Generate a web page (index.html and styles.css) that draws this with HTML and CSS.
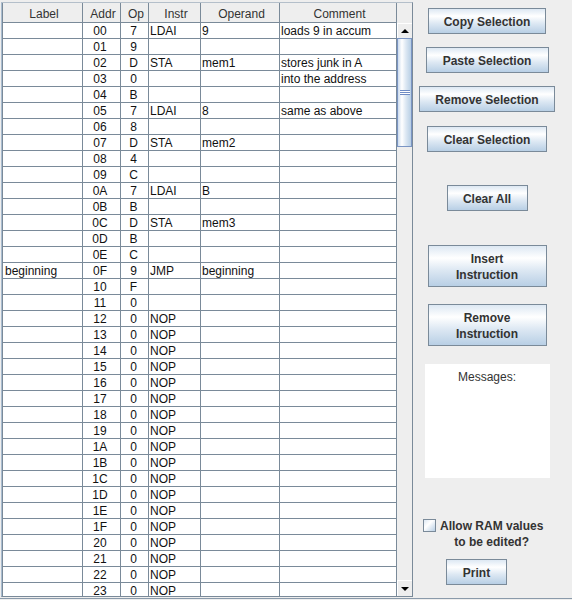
FILE: index.html
```html
<!DOCTYPE html>
<html>
<head>
<meta charset="utf-8">
<link rel="stylesheet" href="styles.css">
</head>
<body>
<div class="app">
  <div class="pane">
    <div class="table-col">
      <div class="thead">
        <div class="th">Label</div><div class="th">Addr</div><div class="th">Op</div><div class="th">Instr</div><div class="th">Operand</div><div class="th">Comment</div>
      </div>
      <div class="row"><div class="c c-label"></div><div class="c c-addr">00</div><div class="c c-op">7</div><div class="c c-txt">LDAI</div><div class="c c-txt">9</div><div class="c c-txt">loads 9 in accum</div></div>
      <div class="row"><div class="c c-label"></div><div class="c c-addr">01</div><div class="c c-op">9</div><div class="c c-txt"></div><div class="c c-txt"></div><div class="c c-txt"></div></div>
      <div class="row"><div class="c c-label"></div><div class="c c-addr">02</div><div class="c c-op">D</div><div class="c c-txt">STA</div><div class="c c-txt">mem1</div><div class="c c-txt">stores junk in A</div></div>
      <div class="row"><div class="c c-label"></div><div class="c c-addr">03</div><div class="c c-op">0</div><div class="c c-txt"></div><div class="c c-txt"></div><div class="c c-txt">into the address</div></div>
      <div class="row"><div class="c c-label"></div><div class="c c-addr">04</div><div class="c c-op">B</div><div class="c c-txt"></div><div class="c c-txt"></div><div class="c c-txt"></div></div>
      <div class="row"><div class="c c-label"></div><div class="c c-addr">05</div><div class="c c-op">7</div><div class="c c-txt">LDAI</div><div class="c c-txt">8</div><div class="c c-txt">same as above</div></div>
      <div class="row"><div class="c c-label"></div><div class="c c-addr">06</div><div class="c c-op">8</div><div class="c c-txt"></div><div class="c c-txt"></div><div class="c c-txt"></div></div>
      <div class="row"><div class="c c-label"></div><div class="c c-addr">07</div><div class="c c-op">D</div><div class="c c-txt">STA</div><div class="c c-txt">mem2</div><div class="c c-txt"></div></div>
      <div class="row"><div class="c c-label"></div><div class="c c-addr">08</div><div class="c c-op">4</div><div class="c c-txt"></div><div class="c c-txt"></div><div class="c c-txt"></div></div>
      <div class="row"><div class="c c-label"></div><div class="c c-addr">09</div><div class="c c-op">C</div><div class="c c-txt"></div><div class="c c-txt"></div><div class="c c-txt"></div></div>
      <div class="row"><div class="c c-label"></div><div class="c c-addr">0A</div><div class="c c-op">7</div><div class="c c-txt">LDAI</div><div class="c c-txt">B</div><div class="c c-txt"></div></div>
      <div class="row"><div class="c c-label"></div><div class="c c-addr">0B</div><div class="c c-op">B</div><div class="c c-txt"></div><div class="c c-txt"></div><div class="c c-txt"></div></div>
      <div class="row"><div class="c c-label"></div><div class="c c-addr">0C</div><div class="c c-op">D</div><div class="c c-txt">STA</div><div class="c c-txt">mem3</div><div class="c c-txt"></div></div>
      <div class="row"><div class="c c-label"></div><div class="c c-addr">0D</div><div class="c c-op">B</div><div class="c c-txt"></div><div class="c c-txt"></div><div class="c c-txt"></div></div>
      <div class="row"><div class="c c-label"></div><div class="c c-addr">0E</div><div class="c c-op">C</div><div class="c c-txt"></div><div class="c c-txt"></div><div class="c c-txt"></div></div>
      <div class="row"><div class="c c-label">beginning</div><div class="c c-addr">0F</div><div class="c c-op">9</div><div class="c c-txt">JMP</div><div class="c c-txt">beginning</div><div class="c c-txt"></div></div>
      <div class="row"><div class="c c-label"></div><div class="c c-addr">10</div><div class="c c-op">F</div><div class="c c-txt"></div><div class="c c-txt"></div><div class="c c-txt"></div></div>
      <div class="row"><div class="c c-label"></div><div class="c c-addr">11</div><div class="c c-op">0</div><div class="c c-txt"></div><div class="c c-txt"></div><div class="c c-txt"></div></div>
      <div class="row"><div class="c c-label"></div><div class="c c-addr">12</div><div class="c c-op">0</div><div class="c c-txt">NOP</div><div class="c c-txt"></div><div class="c c-txt"></div></div>
      <div class="row"><div class="c c-label"></div><div class="c c-addr">13</div><div class="c c-op">0</div><div class="c c-txt">NOP</div><div class="c c-txt"></div><div class="c c-txt"></div></div>
      <div class="row"><div class="c c-label"></div><div class="c c-addr">14</div><div class="c c-op">0</div><div class="c c-txt">NOP</div><div class="c c-txt"></div><div class="c c-txt"></div></div>
      <div class="row"><div class="c c-label"></div><div class="c c-addr">15</div><div class="c c-op">0</div><div class="c c-txt">NOP</div><div class="c c-txt"></div><div class="c c-txt"></div></div>
      <div class="row"><div class="c c-label"></div><div class="c c-addr">16</div><div class="c c-op">0</div><div class="c c-txt">NOP</div><div class="c c-txt"></div><div class="c c-txt"></div></div>
      <div class="row"><div class="c c-label"></div><div class="c c-addr">17</div><div class="c c-op">0</div><div class="c c-txt">NOP</div><div class="c c-txt"></div><div class="c c-txt"></div></div>
      <div class="row"><div class="c c-label"></div><div class="c c-addr">18</div><div class="c c-op">0</div><div class="c c-txt">NOP</div><div class="c c-txt"></div><div class="c c-txt"></div></div>
      <div class="row"><div class="c c-label"></div><div class="c c-addr">19</div><div class="c c-op">0</div><div class="c c-txt">NOP</div><div class="c c-txt"></div><div class="c c-txt"></div></div>
      <div class="row"><div class="c c-label"></div><div class="c c-addr">1A</div><div class="c c-op">0</div><div class="c c-txt">NOP</div><div class="c c-txt"></div><div class="c c-txt"></div></div>
      <div class="row"><div class="c c-label"></div><div class="c c-addr">1B</div><div class="c c-op">0</div><div class="c c-txt">NOP</div><div class="c c-txt"></div><div class="c c-txt"></div></div>
      <div class="row"><div class="c c-label"></div><div class="c c-addr">1C</div><div class="c c-op">0</div><div class="c c-txt">NOP</div><div class="c c-txt"></div><div class="c c-txt"></div></div>
      <div class="row"><div class="c c-label"></div><div class="c c-addr">1D</div><div class="c c-op">0</div><div class="c c-txt">NOP</div><div class="c c-txt"></div><div class="c c-txt"></div></div>
      <div class="row"><div class="c c-label"></div><div class="c c-addr">1E</div><div class="c c-op">0</div><div class="c c-txt">NOP</div><div class="c c-txt"></div><div class="c c-txt"></div></div>
      <div class="row"><div class="c c-label"></div><div class="c c-addr">1F</div><div class="c c-op">0</div><div class="c c-txt">NOP</div><div class="c c-txt"></div><div class="c c-txt"></div></div>
      <div class="row"><div class="c c-label"></div><div class="c c-addr">20</div><div class="c c-op">0</div><div class="c c-txt">NOP</div><div class="c c-txt"></div><div class="c c-txt"></div></div>
      <div class="row"><div class="c c-label"></div><div class="c c-addr">21</div><div class="c c-op">0</div><div class="c c-txt">NOP</div><div class="c c-txt"></div><div class="c c-txt"></div></div>
      <div class="row"><div class="c c-label"></div><div class="c c-addr">22</div><div class="c c-op">0</div><div class="c c-txt">NOP</div><div class="c c-txt"></div><div class="c c-txt"></div></div>
      <div class="row"><div class="c c-label"></div><div class="c c-addr">23</div><div class="c c-op">0</div><div class="c c-txt">NOP</div><div class="c c-txt"></div><div class="c c-txt"></div></div>
    </div>
    <div class="vscroll">
      <div class="corner"></div>
      <div class="sb-btn sb-up"><span class="tri-up"></span></div>
      <div class="thumb"><span class="grip"></span></div>
      <div class="track"></div>
      <div class="sb-btn sb-down"><span class="tri-down"></span></div>
    </div>
  </div>
  <div class="side">
    <button class="btn w-copy">Copy Selection</button>
    <button class="btn w-paste gap13">Paste Selection</button>
    <button class="btn w-remsel gap13">Remove Selection</button>
    <button class="btn w-clrsel gap14">Clear Selection</button>
    <button class="btn w-clrall gap33">Clear All</button>
    <button class="btn btn-tall w-ins gap34">Insert<br>Instruction</button>
    <button class="btn btn-tall w-ins gap17">Remove<br>Instruction</button>
    <div class="messages">Messages:</div>
    <div class="check-row">
      <span class="checkbox"></span>
      <span class="check-label">Allow RAM values<br>to be edited?</span>
    </div>
    <button class="btn w-print print">Print</button>
  </div>
</div>
</body>
</html>
```
FILE: styles.css
```css
* { box-sizing: border-box; }

body {
  margin: 0;
  background: #eeeeee;
  font-family: "Liberation Sans", Arial, sans-serif;
  font-size: 12px;
  color: #000;
}

.app {
  display: flex;
  width: 572px;
  height: 599px;
  border-bottom: 1px solid #8a9aaa;
}

/* ---------- table scroll pane ---------- */
.pane {
  display: flex;
  margin: 2px 0 0 1px;
  height: 595px;
  border-top: 1px solid #b4bfca;
  border-bottom: 1px solid #7a8a99;
  border-left: 1px solid #a9bccf;
  border-right: 1px solid #7a8a99;
}

.table-col {
  width: 395px;
  border-left: 1px solid #7a8a99;
  display: flex;
  flex-direction: column;
  overflow: hidden;
  background: #fff;
}

.thead, .row {
  display: grid;
  grid-template-columns: 80px 38px 28px 52px 79px 117px;
  flex: none;
}

.thead {
  height: 20px;
  background: #eeeeee;
  border-bottom: 1px solid #7a8a99;
}

.th {
  border-right: 1px solid #7a8a99;
  text-align: center;
  padding: 3px 0 0 3px;
  line-height: 16px;
  color: #333;
  white-space: nowrap;
}

.c {
  height: 16px;
  border-right: 1px solid #7a8a99;
  border-bottom: 1px solid #7a8a99;
  padding-top: 1px;
  line-height: 14px;
  white-space: nowrap;
  overflow: hidden;
  color: #111;
}

.c-label { padding-left: 2px; }
.c-addr { text-align: center; padding-right: 3px; }
.c-op { text-align: center; padding-right: 2px; }
.c-txt { padding-left: 1px; }

/* ---------- vertical scrollbar ---------- */
.vscroll {
  width: 15px;
  display: flex;
  flex-direction: column;
  background: #eeeeee;
}

.corner { height: 20px; flex: none; }

.sb-btn {
  flex: none;
  display: flex;
  align-items: center;
  justify-content: center;
  background: #eeeeee;
  border-top: 1px solid #fff;
  border-left: 1px solid #fff;
}

.sb-up { height: 15px; }
.sb-down { height: 16px; }

.tri-up {
  width: 0;
  height: 0;
  border-left: 4px solid transparent;
  border-right: 4px solid transparent;
  border-bottom: 4px solid #000;
}

.tri-down {
  width: 0;
  height: 0;
  border-left: 4px solid transparent;
  border-right: 4px solid transparent;
  border-top: 4px solid #000;
}

.thumb {
  flex: none;
  height: 109px;
  border: 1px solid #7b95c4;
  background: linear-gradient(to right, #cddcee 0%, #ffffff 30%, #dde8f3 60%, #b8cfe5 100%);
  display: flex;
  align-items: center;
  justify-content: center;
}

.grip {
  width: 10px;
  height: 5px;
  background: repeating-linear-gradient(to bottom, #6f8cc4 0px, #6f8cc4 1px, #ffffff 1px, #ffffff 2px);
}

.track { flex: 1; background: #eeeeee; }

/* ---------- right panel ---------- */
.side {
  flex: 1;
  display: flex;
  flex-direction: column;
  align-items: center;
  padding: 8px 11px 0 0;
}

.btn {
  flex: none;
  height: 26px;
  padding: 1px 0 0;
  margin: 0;
  border: 1px solid #7a8a99;
  border-radius: 0;
  background: linear-gradient(to bottom, #dde8f3 0%, #ffffff 30%, #dde8f3 60%, #b8cfe5 100%);
  font-family: "Liberation Sans", Arial, sans-serif;
  font-size: 12px;
  font-weight: bold;
  line-height: 16px;
  color: #333;
  text-align: center;
}

.btn-tall { height: 42px; padding-top: 2px; }

.w-copy { width: 118px; }
.w-paste { width: 123px; }
.w-remsel { width: 136px; }
.w-clrsel { width: 120px; }
.w-clrall { width: 81px; }
.w-ins { width: 119px; }
.w-print { width: 61px; }

.gap13 { margin-top: 13px; }
.gap14 { margin-top: 14px; }
.gap17 { margin-top: 17px; }
.gap33 { margin-top: 33px; }
.gap34 { margin-top: 34px; }

.messages {
  flex: none;
  margin-top: 18px;
  width: 125px;
  height: 114px;
  background: #fff;
  text-align: center;
  padding-top: 5px;
  line-height: 16px;
  color: #333;
}

.check-row {
  align-self: flex-start;
  margin: 39px 0 0 10px;
  display: flex;
  align-items: flex-start;
}

.checkbox {
  width: 13px;
  height: 13px;
  margin-top: 2px;
  border: 1px solid #7a8a99;
  background: linear-gradient(to bottom right, #dde8f3, #ffffff 40%, #b8cfe5);
}

.check-label {
  margin-left: 4px;
  padding-top: 1px;
  font-weight: bold;
  line-height: 16px;
  color: #333;
  text-align: center;
}

.print {
  align-self: flex-start;
  margin: 9px 0 0 33px;
}
```
